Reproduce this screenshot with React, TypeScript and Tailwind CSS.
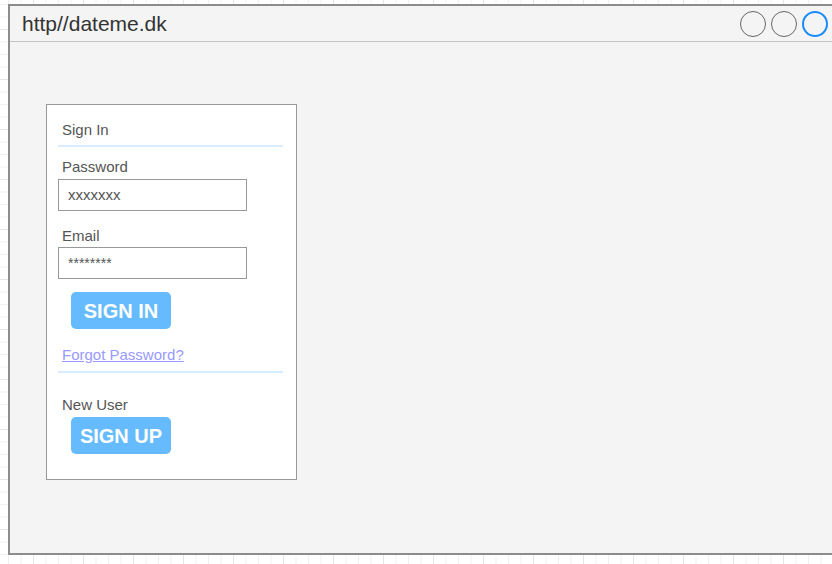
export default function App() {
  return (
    <div className="w-[832px] h-[564px] overflow-hidden bg-white bg-[linear-gradient(to_right,#e6e6e6_1px,transparent_1px),linear-gradient(to_bottom,#e6e6e6_1px,transparent_1px),linear-gradient(to_right,#f0f0f0_1px,transparent_1px),linear-gradient(to_bottom,#f0f0f0_1px,transparent_1px)] bg-[size:50px_50px,50px_50px,12.5px_12.5px,12.5px_12.5px] bg-[position:33px_0,0_29px,8px_0,0_4px] pt-[4px] pl-[8px] font-['Liberation_Sans',Arial,sans-serif]">
      <div className="w-[840px] h-[551px] border-2 border-[#8c8c8c] bg-[#f4f4f4] flex flex-col">
        <div className="h-[36px] shrink-0 border-b border-[#c4c4c4] flex items-center justify-between pl-[12px] pr-[18px]">
          <span className="text-[21px] leading-[24px] text-[#333] pt-[1px]">http//dateme.dk</span>
          <div className="flex items-center gap-[5px]">
            <div className="w-[26px] h-[26px] rounded-full border-[1.5px] border-[#666]" />
            <div className="w-[26px] h-[26px] rounded-full border-[1.5px] border-[#666]" />
            <div className="w-[26px] h-[26px] rounded-full border-2 border-[#1a8cff]" />
          </div>
        </div>
        <div className="pt-[62px] pl-[36px]">
          <div className="w-[251px] h-[376px] bg-white border border-[#999] pl-[11px] pr-[13px] flex flex-col text-[15px] text-[#555]">
            <div className="mt-[15px] h-[20px] leading-[20px] pl-[4px]">Sign In</div>
            <div className="mt-[5px] h-[2px] bg-[#d8ebff]" />
            <div className="mt-[10px] h-[20px] leading-[20px] pl-[4px]">Password</div>
            <div className="mt-[2px] w-[189px] h-[32px] border border-[#999] pl-[9px] flex items-center text-[#555]">xxxxxxx</div>
            <div className="mt-[15px] h-[20px] leading-[20px] pl-[4px]">Email</div>
            <div className="mt-[1px] w-[189px] h-[32px] border border-[#999] pl-[9px] flex items-center text-[#555] text-[14px]">********</div>
            <div className="mt-[13px] ml-[13px] w-[100px] h-[37px] rounded-[5px] bg-[#66bbff] flex items-center justify-center text-white font-bold text-[20px]">SIGN IN</div>
            <div className="mt-[16px] h-[20px] leading-[20px] pl-[4px]">
              <span className="text-[#9999ff] underline">Forgot Password?</span>
            </div>
            <div className="mt-[6px] h-[2px] bg-[#d8ebff]" />
            <div className="mt-[22px] h-[20px] leading-[20px] pl-[4px]">New User</div>
            <div className="mt-[2px] ml-[13px] w-[100px] h-[37px] rounded-[5px] bg-[#66bbff] flex items-center justify-center text-white font-bold text-[20px]">SIGN UP</div>
          </div>
        </div>
      </div>
    </div>
  );
}
